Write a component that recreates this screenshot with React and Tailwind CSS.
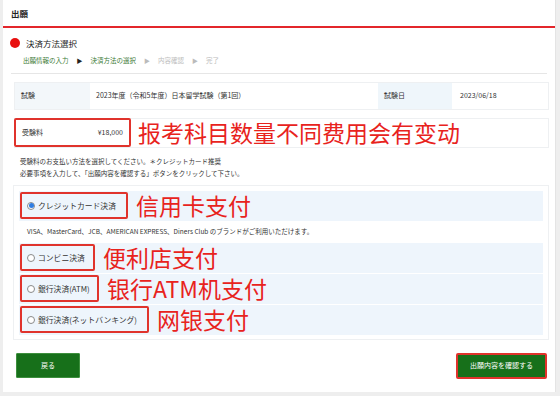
const JP = { fontFamily: '"Noto Sans CJK JP", "Noto Sans", sans-serif' }

const STEPS = [
  { label: '出願情報の入力', done: true },
  { label: '決済方法の選択', done: true },
  { label: '内容確認', done: false },
  { label: '完了', done: false },
]

function Note({ children, className = '' }) {
  return (
    <span
      className={`text-[23px] leading-none text-[#e8231d] whitespace-nowrap ${className}`}
      style={{ fontFamily: '"Noto Sans CJK SC", sans-serif' }}
    >
      {children}
    </span>
  )
}

function Radio({ checked }) {
  return (
    <span className="w-[8px] h-[8px] rounded-full border border-[#8a8a8a] bg-white flex items-center justify-center shrink-0">
      {checked && <span className="w-[5px] h-[5px] rounded-full bg-[#2f7de1]" />}
    </span>
  )
}

function Option({ label, note, checked, boxW }) {
  return (
    <div className="h-[30px] bg-[#eef5fc] flex items-center pl-[1px]">
      <div
        className="h-[27px] border-2 border-[#e0332c] rounded-[2px] flex items-center gap-[3px] pl-[5px] text-[7.8px] text-[#333]"
        style={{ width: boxW }}
      >
        <Radio checked={checked} />
        <span>{label}</span>
      </div>
      <Note className="ml-[8px]">{note}</Note>
    </div>
  )
}

export default function App() {
  return (
    <div className="w-[560px] h-[396px] bg-[#eeeeee] pl-[3px] pr-[4px] pb-[4px]" style={JP}>
      <div className="h-full bg-white flex flex-col border-r border-[#e4e4e4]">

        {/* Header */}
        <div className="h-[26px] flex items-center px-[8px] text-[8.5px] font-bold text-[#222]">出願</div>
        <div className="h-[2px] bg-[#e3262b]" />

        {/* Title */}
        <div className="pt-[9px] pl-[7px] flex items-center gap-[6px]">
          <span className="w-[10px] h-[10px] rounded-full bg-[#e8100f]" />
          <span className="text-[8.5px] text-[#222]">決済方法選択</span>
        </div>

        {/* Steps */}
        <div className="mt-[6px] pl-[20px] flex items-center gap-[8px] text-[6.5px]">
          {STEPS.map((s, i) => (
            <div key={i} className="flex items-center gap-[8px]">
              {i > 0 && (
                <span className={`text-[6px] ${s.done ? 'text-[#222]' : 'text-[#bbb]'}`}>▶</span>
              )}
              <span className={s.done ? 'text-[#3c7a35]' : 'text-[#bdbdbd]'}>{s.label}</span>
            </div>
          ))}
        </div>
        <div className="mt-[7px] mx-[8px] border-b border-[#e6e6e6]" />

        {/* Exam row */}
        <div className="mt-[8px] ml-[11px] mr-[6px] h-[28px] flex border border-[#eef0f2] text-[7px] text-[#333]">
          <div className="w-[75px] bg-[#f3f7fa] flex items-center pl-[6px]">試験</div>
          <div className="flex-1 flex items-center pl-[6px]">2023年度（令和5年度）日本留学試験（第1回）</div>
          <div className="w-[74px] bg-[#eff6fb] flex items-center pl-[6px]">試験日</div>
          <div className="w-[96px] flex items-center pl-[8px]">2023/06/18</div>
        </div>

        {/* Fee row */}
        <div className="mt-[8px] ml-[11px] mr-[6px] h-[30px] flex items-center border border-[#eef0f2] border-l-0">
          <div className="w-[117px] h-[29px] border-2 border-[#e0332c] rounded-[2px] flex items-center justify-between px-[6px] text-[7px] text-[#333]">
            <span>受験料</span>
            <span>¥18,000</span>
          </div>
          <Note className="ml-[7px]">报考科目数量不同费用会有变动</Note>
        </div>

        {/* Notes */}
        <div className="mt-[7px] pl-[17px] text-[6.5px] leading-[12px] text-[#333]">
          <p>受験料のお支払い方法を選択してください。＊クレジットカード推奨</p>
          <p>必要事項を入力して、「出願内容を確認する」ボタンをクリックして下さい。</p>
        </div>

        {/* Payment options */}
        <div className="mt-[6px] ml-[10px] mr-[6px] border border-[#eef0f2] px-[5px] pt-[5px] pb-[4px] flex flex-col">
          <Option label="クレジットカード決済" note="信用卡支付" checked boxW={108} />
          <div className="h-[22px] flex items-center pl-[8px] text-[6.5px] text-[#333]">
            VISA、MasterCard、JCB、AMERICAN EXPRESS、Diners Club のブランドがご利用いただけます。
          </div>
          <div className="flex flex-col gap-[1px]">
            <Option label="コンビニ決済" note="便利店支付" boxW={75} />
            <Option label="銀行決済(ATM)" note="银行ATM机支付" boxW={79} />
            <Option label="銀行決済(ネットバンキング)" note="网银支付" boxW={129} />
          </div>
        </div>

        {/* Buttons */}
        <div className="mt-[13px] pl-[13px] pr-[8px] flex items-center justify-between">
          <button className="w-[64px] h-[25px] bg-[#17701a] border border-[#3d8f3d] text-white text-[7px] rounded-[1px]">
            戻る
          </button>
          <button className="w-[91px] h-[26px] bg-[#17701a] border-2 border-[#e0332c] text-white text-[7px] rounded-[2px]">
            出願内容を確認する
          </button>
        </div>
      </div>
    </div>
  )
}
